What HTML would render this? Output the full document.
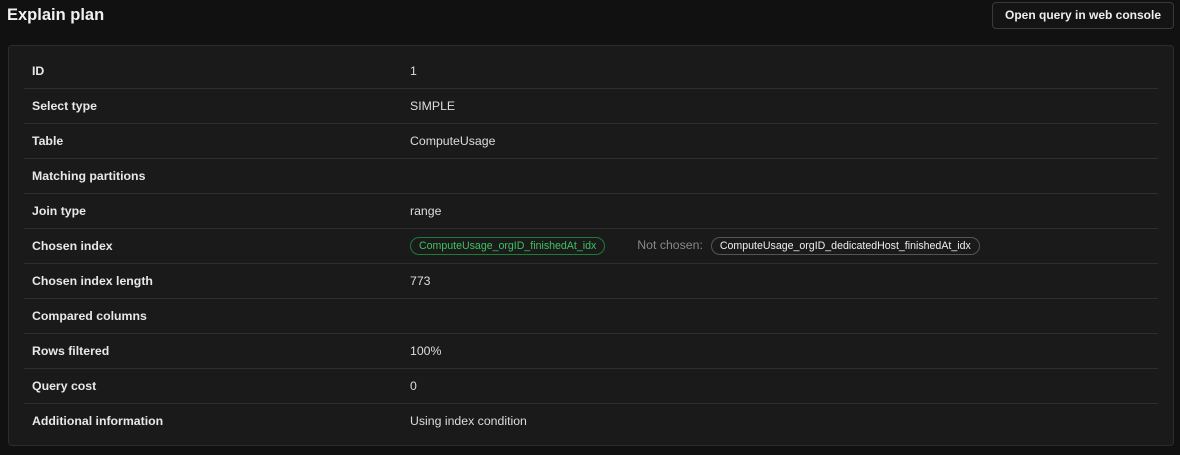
<!DOCTYPE html>
<html><head><style>
body{margin:0;width:1180px;height:455px;background:#111111;font-family:"Liberation Sans",sans-serif;color:#e8e8e8;position:relative;overflow:hidden}
h1{position:absolute;left:7px;top:6px;margin:0;font-size:16.5px;font-weight:600;color:#f0f0f0}
.btn{position:absolute;left:992px;top:2px;width:182px;height:27px;box-sizing:border-box;border:1px solid #3a3a3a;border-radius:4px;background:#141414;font-size:12px;font-weight:600;line-height:25px;text-align:center;color:#eee}
.card{position:absolute;left:8px;top:45px;width:1166px;height:401px;box-sizing:border-box;background:#1a1a1a;border:1px solid #2c2c2c;border-radius:4px}
.row{position:absolute;left:15px;width:1134px;height:35px;border-bottom:1px solid #2e2e2e;font-size:12.3px}
.l{position:absolute;left:8px;top:11px;font-weight:600}
.v{position:absolute;left:386px;top:11px;color:#ddd}
.pill{display:inline-block;border:1px solid #555;border-radius:10px;padding:0 8px;font-size:10.6px;line-height:16px;color:#eee}
.g{border-color:#1f7a36;color:#3fc060}
</style></head><body>
<h1>Explain plan</h1>
<div class="btn">Open query in web console</div>
<div class="card">
<div class="row" style="top:7px"><span class="l">ID</span><span class="v">1</span></div>
<div class="row" style="top:42px"><span class="l">Select type</span><span class="v">SIMPLE</span></div>
<div class="row" style="top:77px"><span class="l">Table</span><span class="v">ComputeUsage</span></div>
<div class="row" style="top:112px"><span class="l">Matching partitions</span></div>
<div class="row" style="top:147px"><span class="l">Join type</span><span class="v">range</span></div>
<div class="row" style="top:182px"><span class="l">Chosen index</span><span class="v" style="top:9px"><span class="pill g">ComputeUsage_orgID_finishedAt_idx</span><span style="color:#888;margin:0 8px 0 32px">Not chosen:</span><span class="pill">ComputeUsage_orgID_dedicatedHost_finishedAt_idx</span></span></div>
<div class="row" style="top:217px"><span class="l">Chosen index length</span><span class="v">773</span></div>
<div class="row" style="top:252px"><span class="l">Compared columns</span></div>
<div class="row" style="top:287px"><span class="l">Rows filtered</span><span class="v">100%</span></div>
<div class="row" style="top:322px"><span class="l">Query cost</span><span class="v">0</span></div>
<div class="row" style="top:357px;border-bottom:none"><span class="l">Additional information</span><span class="v">Using index condition</span></div>
</div>
</body></html>
